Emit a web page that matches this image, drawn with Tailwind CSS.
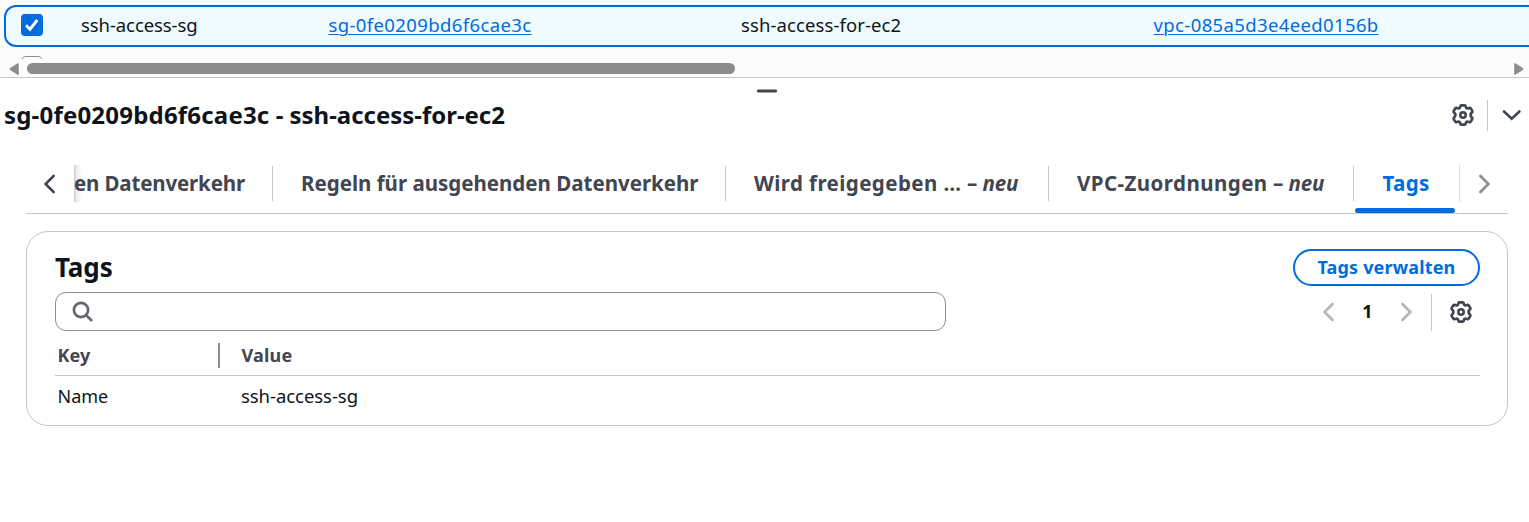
<!DOCTYPE html>
<html lang="de">
<head>
<meta charset="utf-8">
<title>Sicherheitsgruppen</title>
<script src="https://cdn.jsdelivr.net/npm/@tailwindcss/browser@4"></script>
</head>
<body class="h-[522px] overflow-hidden bg-white font-['Noto_Sans',sans-serif] text-[18.5px] text-[#0f141a]">
<svg class="hidden">
  <symbol id="gear" viewBox="-12 -12 24 24">
    <path d="M-1.7-9.7H1.7Q2.5-9.7 2.7-8.8L2.9-7.8Q3.5-6.2 5.2-6.8L6.4-7.1Q7.2-7.4 7.7-6.6L9.3-4Q9.7-3.2 9-2.6L8.3-1.9Q6.9 0 8.3 1.9L9 2.6Q9.7 3.2 9.3 4L7.7 6.6Q7.2 7.4 6.4 7.1L5.2 6.8Q3.5 6.2 2.9 7.8L2.7 8.8Q2.5 9.7 1.7 9.7H-1.7Q-2.5 9.7-2.7 8.8L-2.9 7.8Q-3.5 6.2-5.2 6.8L-6.4 7.1Q-7.2 7.4-7.7 6.6L-9.3 4Q-9.7 3.2-9 2.6L-8.3 1.9Q-6.9 0-8.3-1.9L-9-2.6Q-9.7-3.2-9.3-4L-7.7-6.6Q-7.2-7.4-6.4-7.1L-5.2-6.8Q-3.5-6.2-2.9-7.8L-2.7-8.8Q-2.5-9.7-1.7-9.7Z" fill="none" stroke="currentColor" stroke-width="2.7" stroke-linejoin="round"/>
    <circle r="2.7" fill="none" stroke="currentColor" stroke-width="2.6"/>
  </symbol>
</svg>

<!-- Resource table -->
<section class="h-[77px] overflow-hidden bg-[#fcfcfd] pt-[5px]">
  <div class="ml-1 flex h-[42px] w-[1560px] items-center rounded-xl border-2 border-[#006ce0] bg-[#f0fbff] pb-[2px] leading-6">
    <div class="flex w-[75px] pl-[15px]">
      <span class="flex size-[22px] items-center justify-center rounded-[4px] bg-[#006ce0]">
        <svg class="size-[22px]" viewBox="0 0 22 22"><path d="M5 11.2l4 4L16.3 6" fill="none" stroke="#fff" stroke-width="2.9"/></svg>
      </span>
    </div>
    <div class="w-[247.5px] tracking-[-0.08px]">ssh-access-sg</div>
    <div class="w-[412.5px]"><a class="tracking-[0.38px] text-[#006ce0] underline decoration-1 underline-offset-[2px]">sg-0fe0209bd6f6cae3c</a></div>
    <div class="w-[412.6px] tracking-[0.1px]">ssh-access-for-ec2</div>
    <div><a class="tracking-[0.37px] text-[#006ce0] underline decoration-1 underline-offset-[2px]">vpc-085a5d3e4eed0156b</a></div>
  </div>
  <div class="ml-[21px] mt-[9px] h-[3px] w-[22px] overflow-hidden"><div class="h-[22px] rounded-[5px] border border-[#8c8c94] bg-white"></div></div>
  <div class="flex h-4 items-center justify-between pl-[9px] pr-[5px] pt-[3px]">
    <div class="flex items-center">
      <svg class="h-3 w-[10px]" viewBox="0 0 10 12"><path d="M9.2.5v11L1.2 6.6Q.6 6 1.2 5.4Z" fill="#8b8b8b" stroke="#8b8b8b" stroke-linejoin="round"/></svg>
      <div class="ml-2 h-[11px] w-[708px] rounded-full bg-[#8b8b8b]"></div>
    </div>
    <svg class="h-3 w-[10px]" viewBox="0 0 10 12"><path d="M.8.5v11L8.8 6.6Q9.4 6 8.8 5.4Z" fill="#8b8b8b" stroke="#8b8b8b" stroke-linejoin="round"/></svg>
  </div>
</section>

<!-- Split panel -->
<section class="border-t border-[#c6c6cd]">
  <div class="flex h-4 justify-center pl-[5px] pt-[11px]"><svg class="h-[4px] w-5" viewBox="0 0 20 4"><rect y=".5" width="20" height="3" rx="1.2" fill="#424650"/></svg></div>
  <header class="flex h-[42px] items-center justify-between pl-1 pr-[7px]">
    <h1 class="text-[24px] font-bold leading-8 tracking-[-0.02px]"><span class="tracking-[0.2px]">sg-0fe0209bd6f6cae3c</span> - ssh-access-for-ec2</h1>
    <div class="flex items-center text-[#424650]">
      <svg class="size-6"><use href="#gear"/></svg>
      <div class="ml-3 h-[31px] w-px bg-[#c6c6cd]"></div>
      <svg class="ml-[13px] h-5 w-[21px]" viewBox="0 0 21 20"><path d="M3 6.5L10.7 13.8l7.7-7.3" fill="none" stroke="currentColor" stroke-width="2.6" stroke-linecap="round"/></svg>
    </div>
  </header>

  <div class="ml-[26px] mr-[21px] mt-[17px] flex h-[61px] border-b border-[#c6c6cd] pt-3 text-[20.5px] font-bold leading-[37px] text-[#424650]">
    <div class="w-12 pl-[14px] pt-2"><svg class="h-[21px] w-5" viewBox="0 0 20 21"><path d="M13.6 3L5.6 11l8 8" fill="none" stroke="currentColor" stroke-width="2.6" stroke-linecap="round"/></svg></div>
    <div class="relative flex w-[1385px] overflow-hidden">
      <div class="absolute left-0 top-0 h-[37px] w-2 bg-linear-to-r from-[#c4c4cc] via-[#ededf0] via-30% to-transparent"></div>
      <div class="relative w-[198px] whitespace-nowrap tracking-[-0.15px]">en Datenverkehr</div>
      <div class="mt-px h-[35px] w-px bg-[#c6c6cd]"></div>
      <div class="w-[452px] whitespace-nowrap pl-7">Regeln für ausgehenden Datenverkehr</div>
      <div class="mt-px h-[35px] w-px bg-[#c6c6cd]"></div>
      <div class="flex w-[322px] whitespace-nowrap pl-7"><span class="w-[213px] tracking-[0.42px]">Wird freigegeben …</span><span class="tracking-[-0.1px]">– <i>neu</i></span></div>
      <div class="mt-px h-[35px] w-px bg-[#c6c6cd]"></div>
      <div class="flex w-[304px] whitespace-nowrap pl-7"><span class="w-[196px] tracking-[0.44px]">VPC-Zuordnungen</span><span class="tracking-[-0.1px]">– <i>neu</i></span></div>
      <div class="mt-px h-[35px] w-px bg-[#c6c6cd]"></div>
      <div class="ml-px flex w-[100px] flex-col justify-between text-[#006ce0]"><span class="pl-[27.5px] tracking-[0.4px]">Tags</span><span class="h-[5px] rounded-full bg-[#006ce0]"></span></div>
    </div>
    <div class="h-[37px] w-px bg-[#dedee3]"></div>
    <div class="pl-[14px] pt-2 text-[#8c8c94]"><svg class="h-[21px] w-5" viewBox="0 0 20 21"><path d="M6.4 3l8 8-8 8" fill="none" stroke="currentColor" stroke-width="2.6" stroke-linecap="round"/></svg></div>
  </div>

  <div class="ml-[26px] mr-[21px] mt-[17px] h-[195px] rounded-[22px] border border-[#c6c6cd] pl-7 pr-[27px] pt-[17px]">
    <div class="flex h-[37px] items-center justify-between">
      <h2 class="-mt-[2px] text-[26px] font-bold leading-9 tracking-[-0.1px]">Tags</h2>
      <button class="flex h-[37px] w-[187px] items-center justify-center rounded-full border-2 border-[#006ce0] pb-px text-[18px] font-bold leading-6 tracking-[0.16px] text-[#006ce0]">Tags verwalten</button>
    </div>
    <div class="mt-[6px] flex h-[39px] items-center justify-between">
      <div class="flex h-[39px] w-[891px] items-center rounded-[11px] border border-[#8c8c94] pl-4">
        <svg class="size-[22px]" viewBox="0 0 22 22"><g fill="none" stroke="#656871" stroke-width="2.7"><circle cx="9" cy="9" r="7.1"/><path d="M14 14l6 6"/></g></svg>
      </div>
      <div class="flex items-center pr-[7px] text-[#b4b4bb]">
        <svg class="h-[21px] w-5" viewBox="0 0 20 21"><path d="M13.6 3L5.6 11l8 8" fill="none" stroke="currentColor" stroke-width="2.6" stroke-linecap="round"/></svg>
        <span class="w-[57px] pb-px text-center text-[18px] font-bold leading-6 text-[#0f141a]">1</span>
        <svg class="h-[21px] w-5" viewBox="0 0 20 21"><path d="M6.4 3l8 8-8 8" fill="none" stroke="currentColor" stroke-width="2.6" stroke-linecap="round"/></svg>
        <div class="ml-[15px] mt-[2px] h-[37px] w-px bg-[#c6c6cd]"></div>
        <svg class="ml-[17px] size-6 text-[#424650]"><use href="#gear"/></svg>
      </div>
    </div>
    <div class="flex h-[45px] items-center border-b border-[#c6c6cd] pt-1 text-[18px] font-bold text-[#424650]">
      <div class="w-[163px] pl-[2.5px] leading-6 tracking-[0.1px]">Key</div>
      <div class="mt-px h-[25px] w-[2px] bg-[#8c8c94]"></div>
      <div class="pl-[21.5px] leading-6 tracking-[0.2px]">Value</div>
    </div>
    <div class="flex h-10 items-center leading-6">
      <div class="w-[186px] pl-[2.5px] text-[18px]">Name</div>
      <div class="tracking-[-0.05px]">ssh-access-sg</div>
    </div>
  </div>
</section>
</body>
</html>
